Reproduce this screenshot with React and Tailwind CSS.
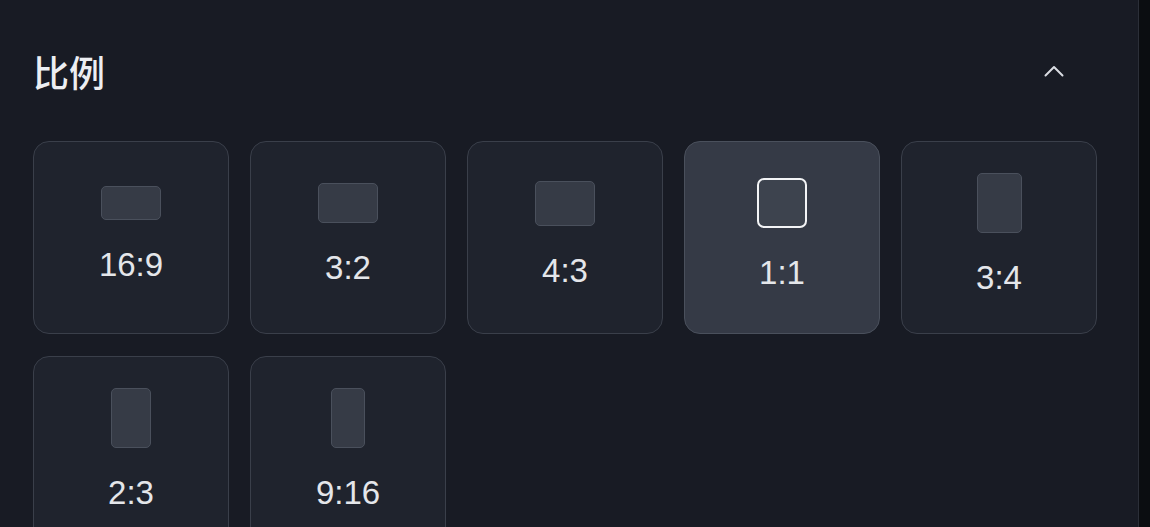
import React, { useState } from 'react';

const ratios = [
  { label: '16:9', box: 'w-[60px] h-[34px]' },
  { label: '3:2', box: 'w-[60px] h-[40px]' },
  { label: '4:3', box: 'w-[60px] h-[45px]' },
  { label: '1:1', box: 'w-[50px] h-[50px]' },
  { label: '3:4', box: 'w-[45px] h-[60px]' },
  { label: '2:3', box: 'w-[40px] h-[60px]' },
  { label: '9:16', box: 'w-[34px] h-[60px]' },
];

const RatioCard = ({ ratio, selected, onSelect }) => (
  <button
    onClick={onSelect}
    className={`h-[193px] rounded-[16px] border flex flex-col items-center justify-center ${
      selected ? 'bg-[#353a46] border-[#4a505c]' : 'bg-[#1f232d] border-[#3a3f4a]'
    }`}
  >
    <div
      className={`${ratio.box} ${
        selected
          ? 'rounded-[7px] border-2 border-[#f3f4f6] bg-[#3d434e]'
          : 'rounded-[5px] border border-[#4a505c] bg-[#363b46]'
      }`}
    />
    <span className="mt-[21px] text-[33px] leading-[48px] text-[#e4e6ea] font-['Liberation_Sans',Arial,sans-serif]">
      {ratio.label}
    </span>
  </button>
);

export default function App() {
  const [selected, setSelected] = useState('1:1');
  const [open, setOpen] = useState(true);

  return (
    <div className="flex w-[1150px] h-[527px] overflow-hidden bg-[#0b0d11]">
      <div className="flex-1 bg-[#181b24] border-r border-[#2b2f38] pl-[33px] pr-[41px]">
        {/* Header */}
        <div className="pt-[44px] flex items-center justify-between">
          <h2 className="text-[36px] leading-[54px] font-medium text-[#eceef2] font-['Noto_Sans_CJK_SC','Noto_Sans',sans-serif]">
            比例
          </h2>
          <button onClick={() => setOpen(!open)} className="mr-[26px] w-[34px] h-[34px] flex items-center justify-center">
            <svg width="34" height="34" viewBox="0 0 34 34" fill="none">
              <path
                d={open ? 'M8.5 21.5L17 13L25.5 21.5' : 'M8.5 13L17 21.5L25.5 13'}
                stroke="#d9dce2"
                strokeWidth="2"
                strokeLinecap="round"
                strokeLinejoin="round"
              />
            </svg>
          </button>
        </div>

        {/* Ratio grid */}
        {open && (
          <div className="mt-[43px] grid grid-cols-5 gap-x-[21px] gap-y-[22px]">
            {ratios.map((r) => (
              <RatioCard
                key={r.label}
                ratio={r}
                selected={selected === r.label}
                onSelect={() => setSelected(r.label)}
              />
            ))}
          </div>
        )}
      </div>
      <div className="w-[11px] shrink-0 bg-[#0b0d11]" />
    </div>
  );
}
